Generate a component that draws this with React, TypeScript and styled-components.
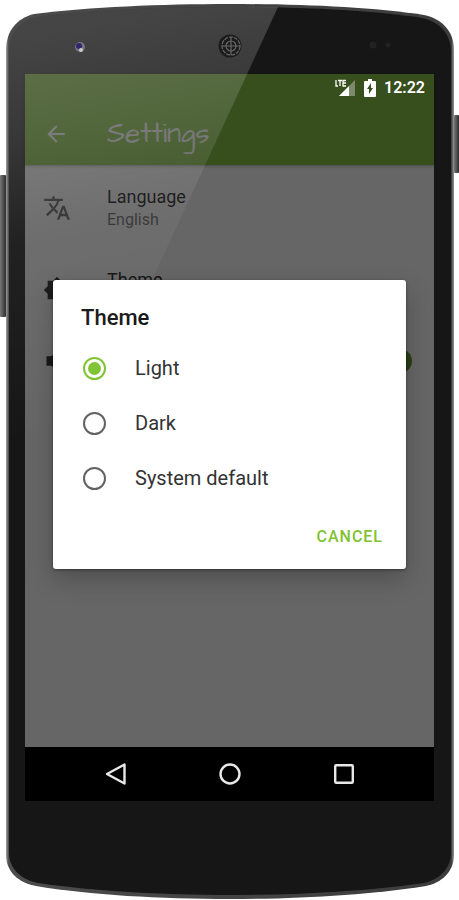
import React, { useState } from "react";
import styled, { createGlobalStyle } from "styled-components";

const accent = "#7fc332";

const GlobalStyle = createGlobalStyle`
  *, *::before, *::after { box-sizing: border-box; }
  body { margin: 0; background: #fff; font-family: Roboto, "Liberation Sans", sans-serif; }
  button { font: inherit; border: 0; padding: 0; background: none; cursor: pointer; }
`;

const Phone = styled.div`
  position: relative;
  display: flex;
  flex-direction: column;
  min-height: 100vh;
  padding: 74px 25px 99px;
`;

const Hardware = styled.svg`
  position: absolute;
  inset: 0;
  width: 100%;
  height: 100%;
`;

const Gloss = styled(Hardware)`
  pointer-events: none;
`;

const Screen = styled.main`
  position: relative;
  isolation: isolate;
  display: flex;
  flex: 1;
  flex-direction: column;
`;

const Display = styled.div`
  position: relative;
  display: flex;
  flex: 1;
  flex-direction: column;
  background: #fff;
`;

const StatusOverlay = styled.div`
  position: absolute;
  inset: 0 0 auto;
  z-index: 2;
`;

const StatusBar = styled.div`
  display: flex;
  align-items: center;
  justify-content: flex-end;
  gap: 8px;
  height: 28px;
  padding: 0 9px;
  color: #fff;
  font-size: 16px;
  line-height: 20px;
  font-weight: 600;
`;

const Header = styled.header`
  background: #8bc34a;
  box-shadow: 0 1px 3px rgba(0, 0, 0, 0.3);
`;

const StatusSlot = styled.div`
  height: 28px;
`;

const Toolbar = styled.div`
  display: flex;
  align-items: center;
  gap: 38px;
  height: 63px;
  padding: 0 18px;
  color: #fff;
`;

const IconButton = styled.button`
  display: flex;
  color: inherit;
`;

const Title = styled.h1`
  margin: 0;
  font-family: "Architects Daughter", Lato, sans-serif;
  font-size: 28px;
  line-height: 36px;
  font-weight: 300;
`;

const List = styled.div`
  padding-top: 2px;
`;

const Row = styled.div<{ $compact?: boolean }>`
  display: flex;
  align-items: center;
  gap: 36px;
  height: ${(p) => (p.$compact ? "60px" : "82px")};
  padding: 0 22px 0 18px;
  color: rgba(0, 0, 0, 0.87);
`;

const RowIcon = styled.svg<{ $strong?: boolean }>`
  flex: none;
  width: 28px;
  height: 28px;
  fill: ${(p) => (p.$strong ? "rgba(0, 0, 0, 0.8)" : "rgba(0, 0, 0, 0.58)")};
`;

const RowText = styled.div`
  flex: 1;
  min-height: 44px;
`;

const RowTitle = styled.div`
  font-size: 18px;
  line-height: 24px;
`;

const RowValue = styled.div`
  color: rgba(0, 0, 0, 0.56);
  font-size: 16px;
  line-height: 22px;
`;

const Switch = styled.input`
  appearance: none;
  display: flex;
  justify-content: flex-end;
  align-items: center;
  width: 42px;
  height: 16px;
  margin: 0;
  border-radius: 8px;
  background: #c5e1a5;

  &::before {
    content: "";
    width: 24px;
    height: 24px;
    border-radius: 50%;
    background: #689f38;
  }
`;

const Scrim = styled.div`
  position: absolute;
  inset: 0;
  z-index: 1;
  display: flex;
  align-items: center;
  justify-content: center;
  padding: 28px 28px 0;
  background: rgba(0, 0, 0, 0.6);
`;

const Dialog = styled.section`
  width: 100%;
  padding: 24px 16px 12px 28px;
  border-radius: 3px;
  background: #fff;
  box-shadow: 0 1px 3px rgba(0, 0, 0, 0.4), 0 10px 26px rgba(0, 0, 0, 0.24);
`;

const DialogTitle = styled.h2`
  margin: 0 0 9px;
  color: #161616;
  font-size: 22px;
  line-height: 28px;
  font-weight: 500;
`;

const Options = styled.fieldset`
  display: grid;
  gap: 1px;
  margin: 0;
  padding: 0;
  border: 0;
`;

const Option = styled.label`
  display: flex;
  align-items: center;
  gap: 29px;
  height: 54px;
  padding-left: 2px;
  color: #333;
  font-size: 20px;
  line-height: 26px;
  cursor: pointer;
`;

const Radio = styled.input`
  appearance: none;
  display: grid;
  place-items: center;
  width: 23px;
  height: 23px;
  margin: 0;
  border: 2px solid #626262;
  border-radius: 50%;

  &:checked {
    border-color: ${accent};
  }

  &:checked::before {
    content: "";
    width: 13px;
    height: 13px;
    border-radius: 50%;
    background: ${accent};
  }
`;

const Actions = styled.div`
  display: flex;
  justify-content: flex-end;
  padding-top: 12px;
`;

const TextButton = styled.button`
  height: 40px;
  padding: 0 7px;
  color: ${accent};
  font-size: 16px;
  line-height: 20px;
  font-weight: 500;
  letter-spacing: 1px;
`;

const NavBar = styled.nav`
  display: flex;
  align-items: center;
  justify-content: center;
  gap: 66px;
  height: 54px;
  background: #000;
`;

const NavButton = styled.button`
  display: grid;
  place-items: center;
  width: 48px;
  height: 48px;
`;

const NavGlyph = styled.svg`
  width: 24px;
  height: 24px;
  fill: none;
  stroke: #e8e8e8;
  stroke-width: 2.4;
`;

const bodyPath =
  "M6 50 C6 31 17 18 34 14 C90 7 160 4 230 4 C300 4 370 7 424 15 C442 19 454 31 454 50 V855 C454 872 441 883 426 886 C370 895 300 899 230 899 C160 899 90 895 36 886 C19 883 6 872 6 855 Z";
const facePath =
  "M9 52 C9 34 20 21 36 17 C92 10 160 7 230 7 C300 7 368 10 422 18 C440 22 451 34 451 52 V853 C451 869 438 880 424 883 C368 891 300 895 230 895 C160 895 92 891 38 883 C22 880 9 869 9 853 Z";

const themes = ["Light", "Dark", "System default"];

export default function App() {
  const [theme, setTheme] = useState("Light");
  const [open, setOpen] = useState(true);

  return (
    <>
      <GlobalStyle />
      <Phone>
        <Hardware viewBox="0 0 459 900" preserveAspectRatio="none" aria-hidden="true">
          <defs>
            <linearGradient id="edge" x1="0" x2="1" y1="0" y2="0">
              <stop offset="0" stopColor="#a0a0a0" />
              <stop offset="0.006" stopColor="#4c4c4c" />
              <stop offset="0.994" stopColor="#3c3c3c" />
              <stop offset="1" stopColor="#999" />
            </linearGradient>
            <linearGradient id="key" x1="0" x2="1" y1="0" y2="0">
              <stop offset="0" stopColor="#777" />
              <stop offset="1" stopColor="#2d2d2d" />
            </linearGradient>
          </defs>
          <rect x="0" y="175" width="6" height="142" rx="1" fill="url(#key)" />
          <rect x="454" y="115" width="5" height="58" rx="1" fill="url(#key)" />
          <path d={bodyPath} fill="url(#edge)" />
          <path d={facePath} fill="#161616" />
        </Hardware>

        <Screen>
          <Display>
            <Header>
              <StatusSlot />
              <Toolbar>
                <IconButton aria-label="Back">
                  <svg width="26" height="26" viewBox="0 0 24 24" fill="currentColor">
                    <path d="M20 11H7.83l5.59-5.59L12 4l-8 8 8 8 1.41-1.41L7.83 13H20z" />
                  </svg>
                </IconButton>
                <Title>Settings</Title>
              </Toolbar>
            </Header>
            <List>
              <Row>
                <RowIcon viewBox="0 0 24 24">
                  <path d="M12.87 15.07l-2.54-2.51.03-.03A17.5 17.5 0 0 0 14.07 6H17V4h-7V2H8v2H1v2h11.17C11.5 7.92 10.44 9.75 9 11.35 8.07 10.32 7.3 9.19 6.69 8h-2c.73 1.63 1.73 3.17 2.98 4.56l-5.09 5.02L4 19l5-5 3.11 3.11zM18.5 10h-2L12 22h2l1.12-3h4.75L21 22h2zm-2.62 7l1.62-4.33L19.12 17z" />
                </RowIcon>
                <RowText>
                  <RowTitle>Language</RowTitle>
                  <RowValue>English</RowValue>
                </RowText>
              </Row>
              <Row>
                <RowIcon viewBox="0 0 24 24" $strong>
                  <path d="M20 15.31L23.31 12 20 8.69V4h-4.69L12 .69 8.69 4H4v4.69L.69 12 4 15.31V20h4.69L12 23.31 15.31 20H20zM12 18V6a6 6 0 0 1 0 12z" />
                </RowIcon>
                <RowText>
                  <RowTitle>Theme</RowTitle>
                  {!open && <RowValue>{theme}</RowValue>}
                </RowText>
              </Row>
              <Row $compact>
                <RowIcon viewBox="0 0 24 24" $strong>
                  <path d="M3 8v8h4l5 4V4L7 8zm13.5 4A4.5 4.5 0 0 0 14 8v8a4.5 4.5 0 0 0 2.5-4z" />
                </RowIcon>
                <RowText />
                <Switch aria-label="Sound" type="checkbox" role="switch" defaultChecked />
              </Row>
            </List>
            {open && (
              <Scrim>
                <Dialog role="dialog" aria-modal="true" aria-labelledby="dialog-title">
                  <DialogTitle id="dialog-title">Theme</DialogTitle>
                  <Options aria-labelledby="dialog-title">
                    {themes.map((name) => (
                      <Option key={name}>
                        <Radio
                          type="radio"
                          name="theme"
                          checked={theme === name}
                          onChange={() => setTheme(name)}
                        />
                        {name}
                      </Option>
                    ))}
                  </Options>
                  <Actions>
                    <TextButton onClick={() => setOpen(false)}>CANCEL</TextButton>
                  </Actions>
                </Dialog>
              </Scrim>
            )}
            <StatusOverlay>
              <StatusBar>
                <svg width="21" height="18" viewBox="0 0 21 18" fill="none">
                  <path d="M20 1v16H4z" fill="#fff" fillOpacity="0.35" />
                  <path d="M14 7v10H4z" fill="#fff" />
                  <path d="M1 1v6h2M3 1.5h4M5 1.5V7M11 1.5H8V7h3M8 4h3" stroke="#fff" strokeWidth="1.3" />
                </svg>
                <svg width="12" height="18" viewBox="0 0 12 18">
                  <path d="M4 0h4v2h3q1 0 1 1v14q0 1-1 1H1q-1 0-1-1V3q0-1 1-1h3z" fill="#fff" />
                  <path d="M7 4L3 10h2v5l4-6H7z" fill="#384e1e" />
                </svg>
                <span>12:22</span>
              </StatusBar>
            </StatusOverlay>
          </Display>
          <NavBar aria-label="System">
            <NavButton aria-label="Back">
              <NavGlyph viewBox="0 0 24 24"><path d="M20.5 2.5v19L3 12z" strokeLinejoin="round" /></NavGlyph>
            </NavButton>
            <NavButton aria-label="Home">
              <NavGlyph viewBox="0 0 24 24"><circle cx="12" cy="12" r="9.5" /></NavGlyph>
            </NavButton>
            <NavButton aria-label="Recent apps">
              <NavGlyph viewBox="0 0 24 24"><rect x="3.2" y="3.2" width="17.6" height="17.6" rx="1" /></NavGlyph>
            </NavButton>
          </NavBar>
        </Screen>

        <Gloss viewBox="0 0 459 900" preserveAspectRatio="none" aria-hidden="true">
          <defs>
            <linearGradient id="shine" gradientUnits="userSpaceOnUse" x1="80" y1="30" x2="150" y2="420">
              <stop offset="0" stopColor="#fff" stopOpacity="0.2" />
              <stop offset="0.25" stopColor="#fff" stopOpacity="0.14" />
              <stop offset="0.5" stopColor="#fff" stopOpacity="0.05" />
              <stop offset="1" stopColor="#fff" stopOpacity="0" />
            </linearGradient>
          </defs>
          <path d="M9 52 C9 34 20 21 36 17 C92 10 160 7 230 7 H278 L9 590 Z" fill="url(#shine)" />
          <circle cx="80" cy="47" r="5" fill="#77757d" />
          <circle cx="79" cy="46" r="3" fill="#33246f" />
          <circle cx="81" cy="50" r="2" fill="#c9c9cf" />
          <circle cx="230" cy="46" r="11.5" fill="#1c1c1c" />
          <g fill="none" stroke="#686868" strokeWidth="1.2">
            <circle cx="231" cy="46" r="9" strokeDasharray="4 1" />
            <circle cx="231" cy="46" r="5" />
            <path d="M222 46h18M231 37v18" />
          </g>
          <circle cx="373" cy="45" r="3.5" fill="#222" />
          <circle cx="388" cy="45" r="2.5" fill="#222" />
        </Gloss>
      </Phone>
    </>
  );
}
